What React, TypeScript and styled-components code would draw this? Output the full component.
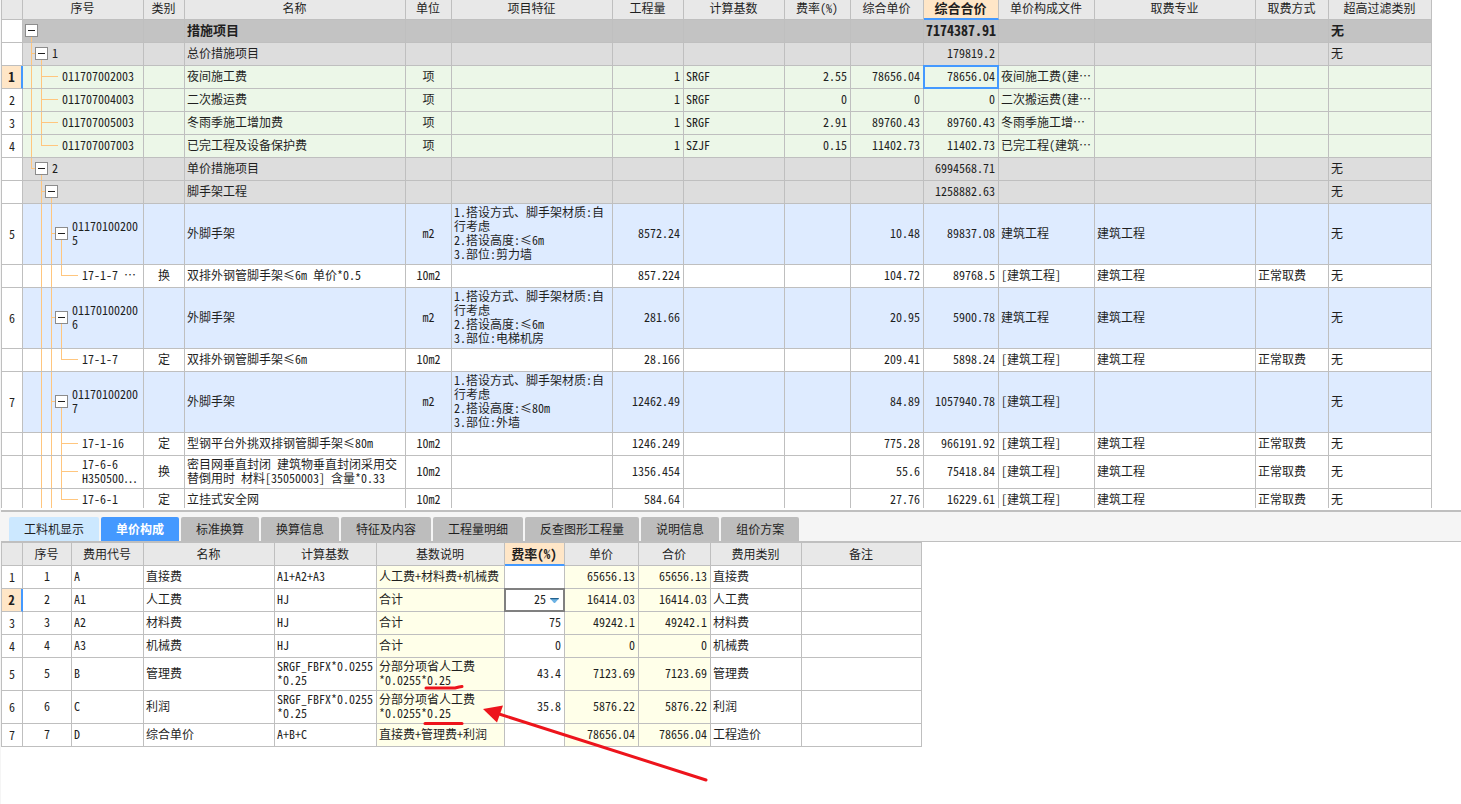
import React from 'react';
import styled, { createGlobalStyle, css } from 'styled-components';

const color = {
  line: '#bfbfbf',
  header: '#e8e8e8',
  chrome: '#f5f5f5',
  accent: '#4499ff',
  peach: '#ffe6c7',
  text: '#1f1f1f',
  tree: '#ffc67e',
  note: '#ed141c',
};

const toneColor = {
  root: '#c3c3c3',
  group: '#dddddd',
  measure: '#ecf7e8',
  item: '#deebff',
  plain: '#ffffff',
  computed: '#ffffe9',
};
type Tone = keyof typeof toneColor;
type Align = 'left' | 'center' | 'right';

const GlobalStyle = createGlobalStyle`
  * { box-sizing: border-box; }
  body {
    margin: 0;
    background: #fff;
    color: ${color.text};
    font-family: "Noto Sans CJK SC", "Noto Sans", sans-serif;
    font-size: 12px;
    line-height: 14px;
  }
  button, select { font: inherit; color: inherit; }
`;

const Page = styled.main`
  display: flex;
  flex-direction: column;
  min-height: 100vh;
  border-left: 1px solid ${color.chrome};
`;

const Pane = styled.section`
  max-height: 508px;
  overflow: hidden;
`;

const DetailPane = styled.section`
  position: relative;
  flex: 1;
`;

const Grid = styled.table`
  table-layout: fixed;
  width: 0;
  border-collapse: separate;
  border-spacing: 0;
  border-left: 1px solid ${color.line};
  font-feature-settings: "hwid";
`;

const HeadCell = styled.th<{ $active?: boolean; $clipped?: boolean }>`
  height: ${p => (p.$clipped ? 20 : 23)}px;
  padding: ${p => (p.$clipped ? '0 1px 3px 0' : '0 1px 0 0')};
  border-right: 1px solid ${color.line};
  border-bottom: 1px solid ${color.line};
  background: ${color.header};
  font-weight: 400;
  white-space: nowrap;
  ${p =>
    p.$active &&
    css`
      border-bottom: 2px solid ${color.accent};
      background: ${color.peach};
      font-size: 13px;
      font-weight: 700;
    `}
`;

const Cell = styled.td<{ $tone?: Tone; $align?: Align; $bold?: boolean; $selected?: boolean }>`
  position: relative;
  padding: 0 ${p => (p.$align === 'right' && !p.$bold ? 3 : 2)}px 2px 2px;
  border-right: 1px solid ${color.line};
  border-bottom: 1px solid ${color.line};
  background: ${p => toneColor[p.$tone ?? 'plain']};
  text-align: ${p => p.$align ?? 'left'};
  vertical-align: middle;
  white-space: pre-wrap;
  word-break: break-all;
  ${p =>
    p.$bold &&
    css`
      font-size: ${p.$align === 'right' ? 14 : 13}px;
      font-weight: 700;
    `}
  ${p =>
    p.$selected &&
    css`
      &::after {
        content: '';
        position: absolute;
        inset: -1px;
        border: 2px solid ${color.accent};
      }
    `}
`;

const RowNumber = styled.td<{ $current?: boolean }>`
  padding: 0;
  border-right: 1px solid ${color.line};
  border-bottom: 1px solid ${color.line};
  text-align: center;
  ${p =>
    p.$current &&
    css`
      border-right: 2px solid ${color.accent};
      background: ${color.peach};
      font-size: 13px;
      font-weight: 700;
    `}
`;

const TreeCell = styled(Cell)`
  padding: 0;
`;

const TreeStack = styled.div<{ $height: number }>`
  display: grid;
  height: ${p => p.$height}px;
  > * { grid-area: 1 / 1; }
`;

const TreeLines = styled.svg`
  display: block;
  stroke: ${color.tree};
  fill: none;
`;

const TreeContent = styled.div<{ $indent: number }>`
  display: flex;
  align-items: center;
  gap: 4px;
  min-width: 0;
  padding: 0 0 1px ${p => p.$indent}px;
`;

const TreeText = styled.span`
  padding-bottom: 1px;
`;

/** keeps the ellipsis full width and centred after Latin text */
const Ellipsis = styled.span`
  font-feature-settings: normal;
`;

const Toggle = styled.button`
  flex: none;
  display: flex;
  align-items: center;
  justify-content: center;
  width: 13px;
  height: 13px;
  padding: 0;
  border: 1px solid #8c8c8c;
  background: #fff;
  &::before {
    content: '';
    width: 7px;
    height: 1px;
    background: ${color.text};
  }
`;

const TabBar = styled.div`
  display: flex;
  align-items: flex-end;
  gap: 2px;
  height: 32px;
  margin-top: 2px;
  padding-left: 8px;
  border-top: 2px solid ${color.line};
  border-bottom: 1px solid ${color.line};
  background: ${color.chrome};
`;

const tabLook = {
  idle: css`background: #bdbdbd;`,
  hover: css`background: #cce8ff;`,
  active: css`background: ${color.accent}; color: #fff; font-weight: 700;`,
};

const Tab = styled.button<{ $look: keyof typeof tabLook }>`
  height: 24px;
  padding: 0 15px;
  border: 0;
  border-radius: 2px 2px 0 0;
  white-space: nowrap;
  ${p => tabLook[p.$look]}
`;

const RateCell = styled(Cell)`
  padding: 0;
`;

const RateBox = styled.label`
  position: absolute;
  inset: -1px;
  display: flex;
  align-items: center;
  border: 2px solid #808080;
  background: #fff;
`;

const RateSelect = styled.select`
  flex: 1;
  min-width: 0;
  height: 18px;
  padding: 0 4px 2px 0;
  border: 0;
  outline: 0;
  appearance: none;
  background: none;
  text-align: right;
  text-align-last: right;
`;

const RateArrow = styled.svg`
  flex: none;
  margin-right: 4px;
`;

const Annotation = styled.svg`
  position: absolute;
  top: 0;
  left: 0;
  pointer-events: none;
`;

interface Branch {
  /** centres of the vertical guides that run through the whole row */
  through: number[];
  /** centre of the parent guide that this row hangs from */
  from?: number;
  last?: boolean;
  toggle?: number;
}

const level = [8, 18, 28, 38];

function TreeNode({ branch, height, text }: { branch: Branch; height: number; text: string }) {
  const mid = height / 2 - 0.5;
  const { through, from, last, toggle } = branch;
  const x = (n: number) => n + 0.5;
  const indent = toggle !== undefined ? toggle - 6 : (from ?? 0) + 21;
  const reach = toggle !== undefined ? toggle - 6 : (from ?? 0) + 17;
  const shortened = text.endsWith('…');
  let d = through.map(c => `M${x(c)} 0V${height}`).join('');
  if (from !== undefined) {
    d += `M${x(from)} 0V${last ? mid : height}M${from} ${mid}H${reach}`;
  }
  if (toggle !== undefined) d += `M${x(toggle)} ${mid}V${height}`;
  return (
    <TreeStack $height={height}>
      <TreeLines width={60} height={height} aria-hidden>
        <path d={d} />
      </TreeLines>
      <TreeContent $indent={indent}>
        {toggle !== undefined && <Toggle aria-label="折叠" />}
        <TreeText>
          {shortened ? text.slice(0, -1) : text}
          {shortened && <Ellipsis>…</Ellipsis>}
        </TreeText>
      </TreeContent>
    </TreeStack>
  );
}

interface Column {
  title: string;
  width: number;
  align?: Align;
}

const measureColumns: Column[] = [
  { title: '序号', width: 121 },
  { title: '类别', width: 41, align: 'center' },
  { title: '名称', width: 221 },
  { title: '单位', width: 46, align: 'center' },
  { title: '项目特征', width: 161 },
  { title: '工程量', width: 71, align: 'right' },
  { title: '计算基数', width: 101 },
  { title: '费率(%)', width: 66, align: 'right' },
  { title: '综合单价', width: 73, align: 'right' },
  { title: '综合合价', width: 75, align: 'right' },
  { title: '单价构成文件', width: 96 },
  { title: '取费专业', width: 161 },
  { title: '取费方式', width: 73 },
  { title: '超高过滤类别', width: 103 },
];

interface MeasureRow {
  no?: string;
  tone: Tone;
  height: number;
  branch: Branch;
  cells: string[];
}

const [l0, l1, l2, l3] = level;
const feature = (limit: string, part: string) =>
  `1.搭设方式、脚手架材质:自\n行考虑\n2.搭设高度:≤${limit}\n3.部位:${part}`;

const measureRows: MeasureRow[] = [
  { tone: 'root', height: 22, branch: { through: [], toggle: l0 },
    cells: ['', '', '措施项目', '', '', '', '', '', '', '7174387.91', '', '', '', '无'] },
  { tone: 'group', height: 22, branch: { through: [], from: l0, toggle: l1 },
    cells: ['1', '', '总价措施项目', '', '', '', '', '', '', '179819.2', '', '', '', '无'] },
  { no: '1', tone: 'measure', height: 22, branch: { through: [l0], from: l1 },
    cells: ['011707002003', '', '夜间施工费', '项', '', '1', 'SRGF', '2.55', '78656.04', '78656.04', '夜间施工费(建…', '', '', ''] },
  { no: '2', tone: 'measure', height: 22, branch: { through: [l0], from: l1 },
    cells: ['011707004003', '', '二次搬运费', '项', '', '1', 'SRGF', '0', '0', '0', '二次搬运费(建…', '', '', ''] },
  { no: '3', tone: 'measure', height: 22, branch: { through: [l0], from: l1 },
    cells: ['011707005003', '', '冬雨季施工增加费', '项', '', '1', 'SRGF', '2.91', '89760.43', '89760.43', '冬雨季施工增…', '', '', ''] },
  { no: '4', tone: 'measure', height: 22, branch: { through: [l0], from: l1, last: true },
    cells: ['011707007003', '', '已完工程及设备保护费', '项', '', '1', 'SZJF', '0.15', '11402.73', '11402.73', '已完工程(建筑…', '', '', ''] },
  { tone: 'group', height: 22, branch: { through: [], from: l0, last: true, toggle: l1 },
    cells: ['2', '', '单价措施项目', '', '', '', '', '', '', '6994568.71', '', '', '', '无'] },
  { tone: 'group', height: 22, branch: { through: [], from: l1, toggle: l2 },
    cells: ['', '', '脚手架工程', '', '', '', '', '', '', '1258882.63', '', '', '', '无'] },
  { no: '5', tone: 'item', height: 60, branch: { through: [l1], from: l2, toggle: l3 },
    cells: ['011701002005', '', '外脚手架', 'm2', feature('6m', '剪力墙'), '8572.24', '', '', '10.48', '89837.08', '建筑工程', '建筑工程', '', '无'] },
  { tone: 'plain', height: 22, branch: { through: [l1, l2], from: l3, last: true },
    cells: ['17-1-7 …', '换', '双排外钢管脚手架≤6m 单价*0.5', '10m2', '', '857.224', '', '', '104.72', '89768.5', '[建筑工程]', '建筑工程', '正常取费', '无'] },
  { no: '6', tone: 'item', height: 60, branch: { through: [l1], from: l2, toggle: l3 },
    cells: ['011701002006', '', '外脚手架', 'm2', feature('6m', '电梯机房'), '281.66', '', '', '20.95', '5900.78', '建筑工程', '建筑工程', '', '无'] },
  { tone: 'plain', height: 22, branch: { through: [l1, l2], from: l3, last: true },
    cells: ['17-1-7', '定', '双排外钢管脚手架≤6m', '10m2', '', '28.166', '', '', '209.41', '5898.24', '[建筑工程]', '建筑工程', '正常取费', '无'] },
  { no: '7', tone: 'item', height: 60, branch: { through: [l1], from: l2, toggle: l3 },
    cells: ['011701002007', '', '外脚手架', 'm2', feature('80m', '外墙'), '12462.49', '', '', '84.89', '1057940.78', '[建筑工程]', '', '', '无'] },
  { tone: 'plain', height: 22, branch: { through: [l1, l2], from: l3 },
    cells: ['17-1-16', '定', '型钢平台外挑双排钢管脚手架≤80m', '10m2', '', '1246.249', '', '', '775.28', '966191.92', '[建筑工程]', '建筑工程', '正常取费', '无'] },
  { tone: 'plain', height: 32, branch: { through: [l1, l2], from: l3 },
    cells: ['17-6-6\nH350500…', '换', '密目网垂直封闭 建筑物垂直封闭采用交替倒用时 材料[35050003] 含量*0.33', '10m2', '', '1356.454', '', '', '55.6', '75418.84', '[建筑工程]', '建筑工程', '正常取费', '无'] },
  { tone: 'plain', height: 22, branch: { through: [l1, l2], from: l3, last: true },
    cells: ['17-6-1', '定', '立挂式安全网', '10m2', '', '584.64', '', '', '27.76', '16229.61', '[建筑工程]', '建筑工程', '正常取费', '无'] },
];

const PRICE_COLUMN = 9;

function MeasureTable() {
  return (
    <Grid>
      <colgroup>
        <col style={{ width: 21 }} />
        {measureColumns.map(c => <col key={c.title} style={{ width: c.width }} />)}
      </colgroup>
      <thead>
        <tr>
          <HeadCell $clipped />
          {measureColumns.map((c, i) => (
            <HeadCell key={c.title} $clipped $active={i === PRICE_COLUMN}>{c.title}</HeadCell>
          ))}
        </tr>
      </thead>
      <tbody>
        {measureRows.map((row, r) => (
          <tr key={r}>
            <RowNumber $current={row.no === '1'}>{row.no}</RowNumber>
            <TreeCell $tone={row.tone}>
              <TreeNode branch={row.branch} height={row.height} text={row.cells[0]} />
            </TreeCell>
            {row.cells.slice(1).map((text, i) => (
              <Cell
                key={i}
                $tone={row.tone}
                $align={measureColumns[i + 1].align}
                $bold={row.tone === 'root'}
                $selected={row.no === '1' && i + 1 === PRICE_COLUMN}
              >
                {text}
              </Cell>
            ))}
          </tr>
        ))}
      </tbody>
    </Grid>
  );
}

const tabs: { title: string; look: keyof typeof tabLook }[] = [
  { title: '工料机显示', look: 'hover' },
  { title: '单价构成', look: 'active' },
  { title: '标准换算', look: 'idle' },
  { title: '换算信息', look: 'idle' },
  { title: '特征及内容', look: 'idle' },
  { title: '工程量明细', look: 'idle' },
  { title: '反查图形工程量', look: 'idle' },
  { title: '说明信息', look: 'idle' },
  { title: '组价方案', look: 'idle' },
];

const priceColumns: (Column & { computed?: boolean })[] = [
  { title: '序号', width: 49, align: 'center' },
  { title: '费用代号', width: 72 },
  { title: '名称', width: 131 },
  { title: '计算基数', width: 102 },
  { title: '基数说明', width: 128, computed: true },
  { title: '费率(%)', width: 60, align: 'right' },
  { title: '单价', width: 74, align: 'right', computed: true },
  { title: '合价', width: 72, align: 'right', computed: true },
  { title: '费用类别', width: 91 },
  { title: '备注', width: 120 },
];

const priceRows: string[][] = [
  ['1', 'A', '直接费', 'A1+A2+A3', '人工费+材料费+机械费', '', '65656.13', '65656.13', '直接费', ''],
  ['2', 'A1', '人工费', 'HJ', '合计', '25', '16414.03', '16414.03', '人工费', ''],
  ['3', 'A2', '材料费', 'HJ', '合计', '75', '49242.1', '49242.1', '材料费', ''],
  ['4', 'A3', '机械费', 'HJ', '合计', '0', '0', '0', '机械费', ''],
  ['5', 'B', '管理费', 'SRGF_FBFX*0.0255\n*0.25', '分部分项省人工费\n*0.0255*0.25', '43.4', '7123.69', '7123.69', '管理费', ''],
  ['6', 'C', '利润', 'SRGF_FBFX*0.0255\n*0.25', '分部分项省人工费\n*0.0255*0.25', '35.8', '5876.22', '5876.22', '利润', ''],
  ['7', 'D', '综合单价', 'A+B+C', '直接费+管理费+利润', '', '78656.04', '78656.04', '工程造价', ''],
];

const RATE_COLUMN = 5;

const PriceRow = styled.tr<{ $tall: boolean }>`
  height: ${p => (p.$tall ? 33 : 23)}px;
`;

const PriceGrid = styled(Grid)`
  border-top: 1px solid ${color.line};
`;

function PriceTable() {
  return (
    <PriceGrid>
      <colgroup>
        <col style={{ width: 21 }} />
        {priceColumns.map(c => <col key={c.title} style={{ width: c.width }} />)}
      </colgroup>
      <thead>
        <tr>
          <HeadCell />
          {priceColumns.map((c, i) => (
            <HeadCell key={c.title} $active={i === RATE_COLUMN}>{c.title}</HeadCell>
          ))}
        </tr>
      </thead>
      <tbody>
        {priceRows.map(row => (
          <PriceRow key={row[0]} $tall={row[3].includes('\n')}>
            <RowNumber $current={row[0] === '2'}>{row[0]}</RowNumber>
            {row.map((text, i) =>
              row[0] === '2' && i === RATE_COLUMN ? (
                <RateCell key={i}>
                  <RateBox>
                    <RateSelect aria-label="费率(%)" defaultValue={text}>
                      <option>{text}</option>
                    </RateSelect>
                    <RateArrow width="9" height="5" aria-hidden>
                      <path d="M0.5 1H8.5L5 5H4Z" fill="#6cb2e4" />
                      <path d="M0 0H9L8.5 1.2H0.5Z" fill="#22628f" />
                    </RateArrow>
                  </RateBox>
                </RateCell>
              ) : (
                <Cell key={i} $align={priceColumns[i].align} $tone={priceColumns[i].computed ? 'computed' : 'plain'}>
                  {text}
                </Cell>
              ),
            )}
          </PriceRow>
        ))}
      </tbody>
    </PriceGrid>
  );
}

export default function App() {
  return (
    <>
      <GlobalStyle />
      <Page>
        <Pane>
          <MeasureTable />
        </Pane>
        <TabBar role="tablist">
          {tabs.map(t => (
            <Tab key={t.title} role="tab" aria-selected={t.look === 'active'} $look={t.look}>
              {t.title}
            </Tab>
          ))}
        </TabBar>
        <DetailPane>
          <PriceTable />
          <Annotation width="720" height="250" aria-hidden>
            <g fill="none" stroke={color.note} strokeWidth="3" strokeLinecap="round" strokeLinejoin="round">
              <path d="M425 146H454L458 145L461 144.5" />
              <path d="M424 181.5H461" />
              <path d="M495 171L705 238" />
            </g>
            <path d="M482 167L502 163.5L496 180.5Z" fill={color.note} />
          </Annotation>
        </DetailPane>
      </Page>
    </>
  );
}
